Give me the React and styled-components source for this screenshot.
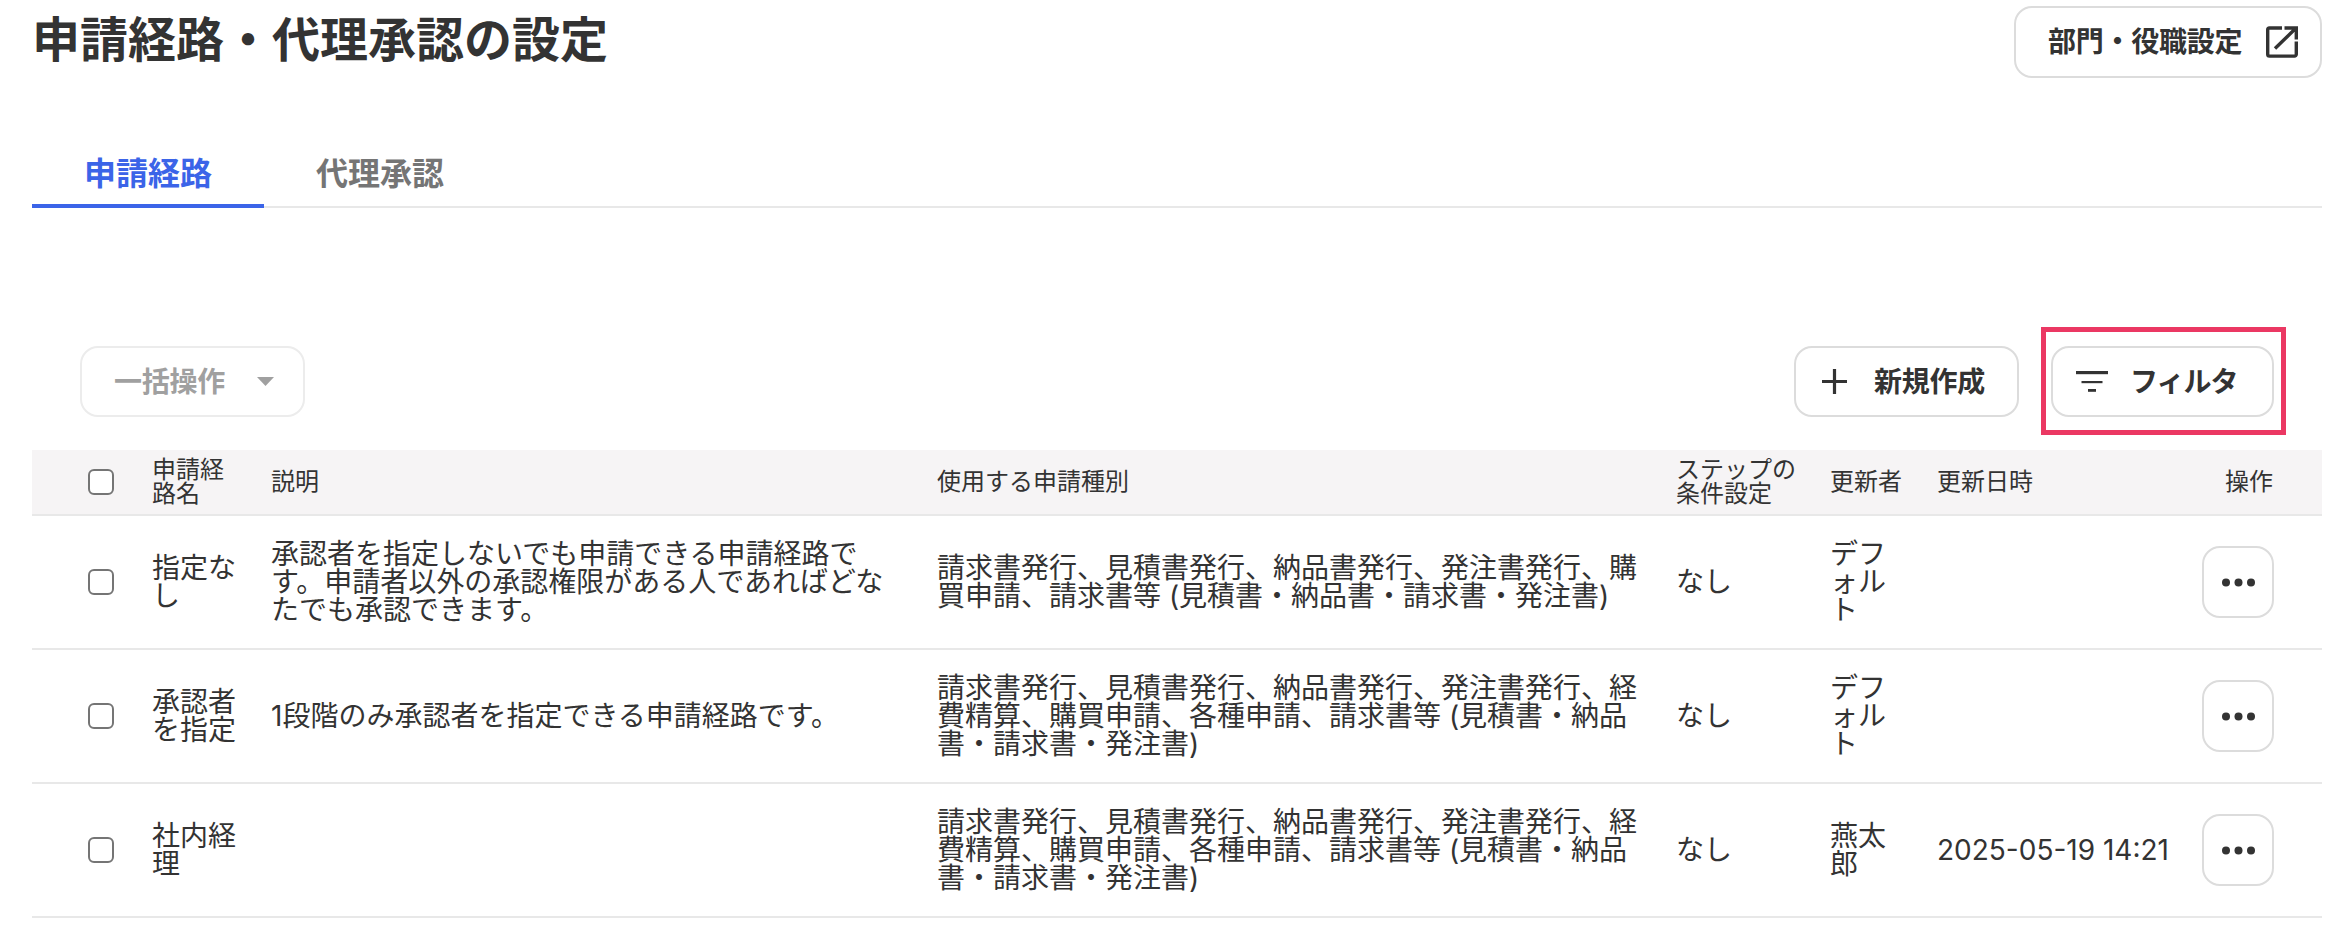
import React from "react";
import styled, { createGlobalStyle } from "styled-components";

const Global = createGlobalStyle`
  html, body { margin: 0; padding: 0; background: #fff; }
  body {
    font-family: "Inter", "Noto Sans CJK JP", "Liberation Sans", sans-serif;
    color: #333;
  }
`;

const Page = styled.div`
  width: 2344px;
  height: 942px;
  box-sizing: border-box;
  padding: 6px 22px 0 32px;
  overflow: hidden;
`;

const Header = styled.header`
  display: flex;
  justify-content: space-between;
  align-items: flex-start;
`;

const Title = styled.h1`
  margin: 10px 0 0;
  font-size: 48px;
  line-height: 48px;
  font-weight: 700;
  color: #333;
`;

const Button = styled.button`
  display: inline-flex;
  align-items: center;
  box-sizing: border-box;
  height: ${(p) => p.$h || 71}px;
  width: ${(p) => p.$w}px;
  padding: 0 0 0 ${(p) => p.$pl}px;
  gap: ${(p) => p.$gap}px;
  background: #fff;
  border: 2px solid ${(p) => (p.disabled ? "#ececec" : "#dcdcdc")};
  border-radius: 18px;
  font-family: inherit;
  font-size: 28px;
  line-height: 32px;
  font-weight: 700;
  letter-spacing: ${(p) => p.$ls || -0.25}px;
  color: ${(p) => (p.disabled ? "#a0a0a0" : "#333")};
  white-space: nowrap;
`;

const Icon = styled.svg`
  display: block;
  flex: none;
`;

const Tabs = styled.nav`
  display: flex;
  margin-top: 80px;
  border-bottom: 2px solid #e8e8e8;
`;

const Tab = styled.div`
  box-sizing: border-box;
  padding: 0 52px 14px 52px;
  margin-bottom: -2px;
  border-bottom: 4px solid ${(p) => (p.$active ? "#3b64e8" : "transparent")};
  font-size: 32px;
  line-height: 32px;
  font-weight: 700;
  color: ${(p) => (p.$active ? "#3b64e8" : "#757575")};
`;

const Toolbar = styled.div`
  display: flex;
  justify-content: space-between;
  align-items: center;
  margin-top: 138px;
  padding: 0 48px;
`;

const ToolbarActions = styled.div`
  display: flex;
  gap: 32px;
`;

const Highlight = styled.div`
  position: relative;
  &::after {
    content: "";
    position: absolute;
    left: -10px;
    right: -12px;
    top: -19px;
    bottom: -18px;
    border: 5px solid #eb3863;
    pointer-events: none;
  }
`;

const Table = styled.table`
  width: 2290px;
  margin-top: 33px;
  table-layout: fixed;
  border-collapse: separate;
  border-spacing: 0;
`;

const HeadCell = styled.th`
  height: 64px;
  padding: 0 ${(p) => (p.$right ? "49px" : "15px")} 0 ${(p) => (p.$check ? "56px" : "15px")};
  background: #f6f4f5;
  border-bottom: 2px solid #e8e8e8;
  font-size: 24px;
  line-height: 24px;
  font-weight: 400;
  text-align: ${(p) => (p.$right ? "right" : "left")};
  color: #333;
  line-break: loose;
`;

const Cell = styled.td`
  height: 132px;
  padding: 0 ${(p) => (p.$right ? "48px" : "15px")} 0 ${(p) => (p.$check ? "56px" : "15px")};
  border-bottom: 2px solid #e8e8e8;
  font-size: 28px;
  line-height: 28px;
  text-align: ${(p) => (p.$right ? "right" : "left")};
  color: #333;
  line-break: loose;
  vertical-align: middle;
`;

const Check = styled.span`
  display: block;
  box-sizing: border-box;
  width: 26px;
  height: 26px;
  border: 2px solid #757575;
  border-radius: 6px;
  background: #fff;
`;

const MoreButton = styled.button`
  display: inline-flex;
  align-items: center;
  justify-content: center;
  box-sizing: border-box;
  width: 72px;
  height: 72px;
  padding: 0;
  vertical-align: middle;
  background: #fff;
  border: 2px solid #dcdcdc;
  border-radius: 18px;
`;

const ExternalIcon = () => (
  <Icon width="32" height="32" viewBox="0 0 32 32" fill="none" stroke="#333" strokeWidth="3.4">
    <path d="M16 2H3.500a1.800 1.800 0 0 0-1.800 1.800V28.300a1.800 1.800 0 0 0 1.800 1.800H28.500a1.800 1.800 0 0 0 1.800-1.800V15.500" />
    <path d="M9 22.500 29.500 2.500M18.500 2H30.300V13.500" />
  </Icon>
);

const PlusIcon = () => (
  <Icon width="25" height="25" viewBox="0 0 25 25" fill="none" stroke="#333" strokeWidth="3.2">
    <path d="M12.500 0V25M0 12.500H25" />
  </Icon>
);

const FilterIcon = () => (
  <Icon width="32" height="21" viewBox="0 0 32 21" fill="none" stroke="#333">
    <path strokeWidth="3.200" d="M0 1.600H32" />
    <path strokeWidth="2.200" d="M5.500 11.100H26.500" />
    <path strokeWidth="2.800" d="M12 19.400H20" />
  </Icon>
);

const CaretIcon = () => (
  <Icon width="17" height="9" viewBox="0 0 17 9" fill="#a0a0a0">
    <path d="M0 0H17L8.500 9Z" />
  </Icon>
);

const DotsIcon = () => (
  <Icon width="33" height="9" viewBox="0 0 33 9" fill="#333">
    <circle cx="4" cy="4.500" r="4" />
    <circle cx="16.500" cy="4.500" r="4" />
    <circle cx="29" cy="4.500" r="4" />
  </Icon>
);

const widths = [105, 119, 666, 739, 154, 107, 264, 136];

const heads = ["申請経路名", "説明", "使用する申請種別", "ステップの条件設定", "更新者", "更新日時"];

const longTypes =
  "請求書発行、見積書発行、納品書発行、発注書発行、経費精算、購買申請、各種申請、請求書等 (見積書・納品書・請求書・発注書)";

const rows = [
  {
    name: "指定なし",
    desc: "承認者を指定しないでも申請できる申請経路です。申請者以外の承認権限がある人であればどなたでも承認できます。",
    types: "請求書発行、見積書発行、納品書発行、発注書発行、購買申請、請求書等 (見積書・納品書・請求書・発注書)",
    by: "デフォルト",
    at: "",
  },
  {
    name: "承認者を指定",
    desc: "1段階のみ承認者を指定できる申請経路です。",
    types: longTypes,
    by: "デフォルト",
    at: "",
  },
  { name: "社内経理", desc: "", types: longTypes, by: "燕太郎", at: "2025-05-19 14:21" },
];

export default function App() {
  return (
    <Page>
      <Global />
      <Header>
        <Title>申請経路・代理承認の設定</Title>
        <Button $w={308} $h={72} $pl={32} $gap={24}>
          部門・役職設定
          <ExternalIcon />
        </Button>
      </Header>

      <Tabs>
        <Tab $active>申請経路</Tab>
        <Tab>代理承認</Tab>
      </Tabs>

      <Toolbar>
        <Button disabled $w={225} $pl={32} $gap={32}>
          一括操作
          <CaretIcon />
        </Button>
        <ToolbarActions>
          <Button $w={225} $pl={26} $gap={27}>
            <PlusIcon />
            新規作成
          </Button>
          <Highlight>
            <Button $w={223} $pl={23} $gap={22} $ls={-1}>
              <FilterIcon />
              フィルタ
            </Button>
          </Highlight>
        </ToolbarActions>
      </Toolbar>

      <Table>
        <colgroup>
          {widths.map((w, i) => (
            <col key={i} width={w} />
          ))}
        </colgroup>
        <thead>
          <tr>
            <HeadCell $check>
              <Check />
            </HeadCell>
            {heads.map((h) => (
              <HeadCell key={h}>{h}</HeadCell>
            ))}
            <HeadCell $right>操作</HeadCell>
          </tr>
        </thead>
        <tbody>
          {rows.map((r) => (
            <tr key={r.name}>
              <Cell $check>
                <Check />
              </Cell>
              <Cell>{r.name}</Cell>
              <Cell>{r.desc}</Cell>
              <Cell>{r.types}</Cell>
              <Cell>なし</Cell>
              <Cell>{r.by}</Cell>
              <Cell>{r.at}</Cell>
              <Cell $right>
                <MoreButton aria-label="操作">
                  <DotsIcon />
                </MoreButton>
              </Cell>
            </tr>
          ))}
        </tbody>
      </Table>
    </Page>
  );
}
